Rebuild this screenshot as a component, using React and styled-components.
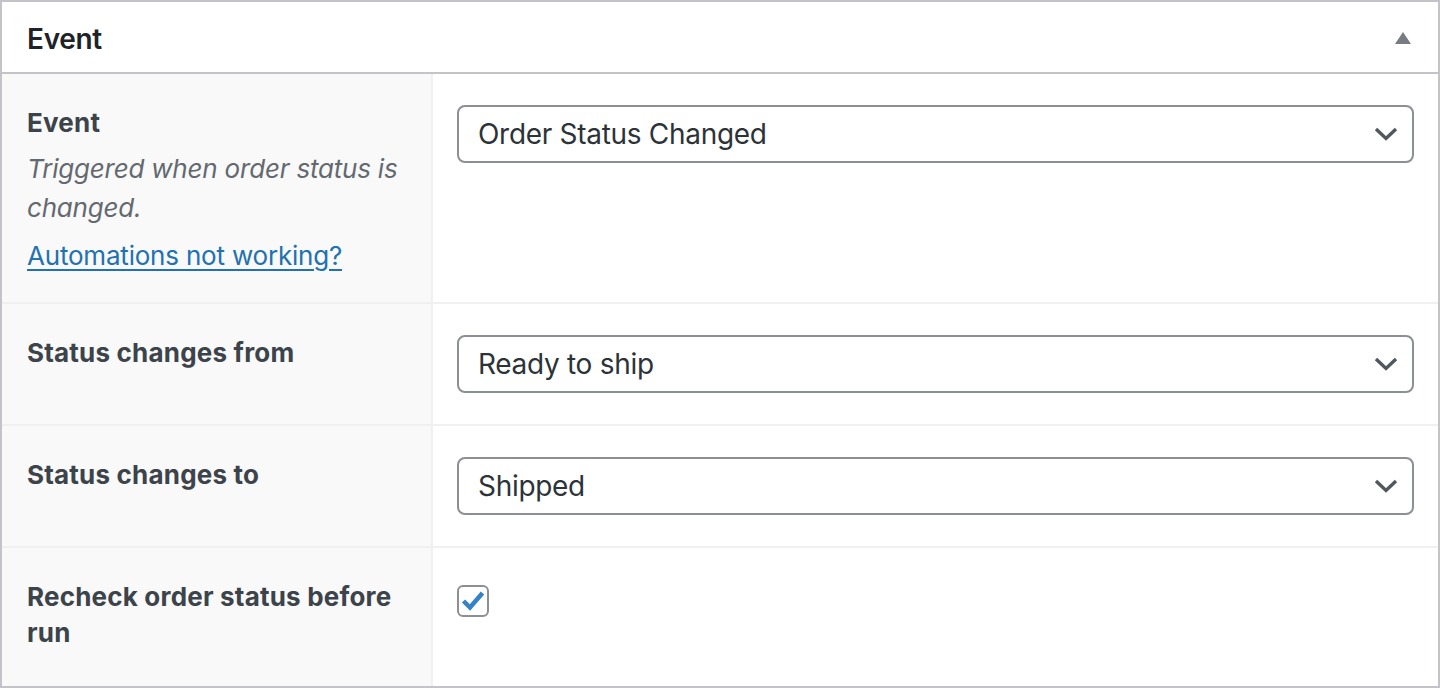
import React from "react";
import styled, { createGlobalStyle } from "styled-components";

const Global = createGlobalStyle`
  html, body { margin: 0; padding: 0; background: #fff; }
  body { font-family: Inter, "Noto Sans", "Liberation Sans", sans-serif; -webkit-font-smoothing: antialiased; }
  * { box-sizing: border-box; }
`;

const Panel = styled.section`
  width: 1440px;
  height: 688px;
  border: 2px solid #c3c4c7;
  display: flex;
  flex-direction: column;
  background: #fff;
  overflow: hidden;
`;

const Header = styled.header`
  height: 72px;
  flex: none;
  border-bottom: 2px solid #c3c4c7;
  display: flex;
  align-items: center;
  justify-content: space-between;
  padding: 3px 27px 0 25px;
`;

const Title = styled.h2`
  margin: 0;
  font-size: 28px;
  font-weight: 600;
  color: #1d2327;
  letter-spacing: -0.3px;
`;

const Toggle = styled.button`
  border: 0;
  background: none;
  padding: 0;
  margin-top: -2px;
  display: flex;
  cursor: pointer;
`;

const Rows = styled.div`
  flex: 1;
  display: flex;
  flex-direction: column;
`;

const Row = styled.div`
  display: grid;
  grid-template-columns: 431px 1fr;
  border-bottom: ${(p) => (p.$last ? "0" : "2px solid #f0f0f1")};
  flex: ${(p) => (p.$last ? "1" : "none")};
`;

const LabelCell = styled.div`
  background: #f9f9f9;
  border-right: 2px solid #f0f0f1;
  padding: 31px 8px 27px 25px;
`;

const Label = styled.div`
  font-size: 26px;
  font-weight: 700;
  line-height: 36.5px;
  color: #3c434a;
  letter-spacing: 0.2px;
`;

const Desc = styled.p`
  margin: 7px 18px 0 0;
  font-size: 26px;
  font-style: italic;
  line-height: 39px;
  color: #646970;
  letter-spacing: -0.2px;
`;

const HelpLink = styled.a`
  display: block;
  margin-top: 9px;
  font-size: 26px;
  line-height: 39px;
  color: #2271b1;
  letter-spacing: -0.2px;
  text-decoration: underline;
  text-underline-offset: 4px;
  text-decoration-thickness: 2px;
`;

const FieldCell = styled.div`
  padding: 31px 24px;
`;

const SelectWrap = styled.div`
  position: relative;
  width: 100%;
`;

const Select = styled.select`
  appearance: none;
  -webkit-appearance: none;
  width: 100%;
  height: 58px;
  border: 2px solid #8c8f94;
  border-radius: 8px;
  background: #fff;
  padding: 0 60px 0 19px;
  font-family: inherit;
  font-size: 28px;
  letter-spacing: -0.3px;
  color: #2c3338;
  outline: none;
`;

const Chevron = styled.svg`
  position: absolute;
  right: 16px;
  top: 50%;
  transform: translateY(-50%);
  pointer-events: none;
`;

const CheckBox = styled.span`
  display: inline-flex;
  align-items: center;
  justify-content: center;
  width: 32px;
  height: 32px;
  margin-top: 6px;
  border: 2px solid #8c8f94;
  border-radius: 6px;
  background: #fff;
`;

function Dropdown({ value }) {
  return (
    <SelectWrap>
      <Select defaultValue={value}>
        <option>{value}</option>
      </Select>
      <Chevron width="24" height="14" viewBox="0 0 24 14">
        <path d="M2 2 L12 11.5 L22 2" fill="none" stroke="#50575e" strokeWidth="3.4" strokeLinecap="butt" />
      </Chevron>
    </SelectWrap>
  );
}

export default function App() {
  return (
    <>
      <Global />
      <Panel>
        <Header>
          <Title>Event</Title>
          <Toggle aria-label="Toggle panel">
            <svg width="16" height="12" viewBox="0 0 16 12">
              <polygon points="8,0 16,12 0,12" fill="#787c82" />
            </svg>
          </Toggle>
        </Header>
        <Rows>
          <Row>
            <LabelCell>
              <Label>Event</Label>
              <Desc>Triggered when order status is changed.</Desc>
              <HelpLink href="#">Automations not working?</HelpLink>
            </LabelCell>
            <FieldCell>
              <Dropdown value="Order Status Changed" />
            </FieldCell>
          </Row>
          <Row>
            <LabelCell>
              <Label>Status changes from</Label>
            </LabelCell>
            <FieldCell>
              <Dropdown value="Ready to ship" />
            </FieldCell>
          </Row>
          <Row>
            <LabelCell>
              <Label>Status changes to</Label>
            </LabelCell>
            <FieldCell>
              <Dropdown value="Shipped" />
            </FieldCell>
          </Row>
          <Row $last>
            <LabelCell>
              <Label>Recheck order status before run</Label>
            </LabelCell>
            <FieldCell>
              <CheckBox role="checkbox" aria-checked="true">
                <svg width="24" height="22" viewBox="0 0 24 22">
                  <path d="M2.5 11 L9 17.5 L21.5 3" fill="none" stroke="#3582c4" strokeWidth="4.5" strokeLinejoin="miter" />
                </svg>
              </CheckBox>
            </FieldCell>
          </Row>
        </Rows>
      </Panel>
    </>
  );
}
